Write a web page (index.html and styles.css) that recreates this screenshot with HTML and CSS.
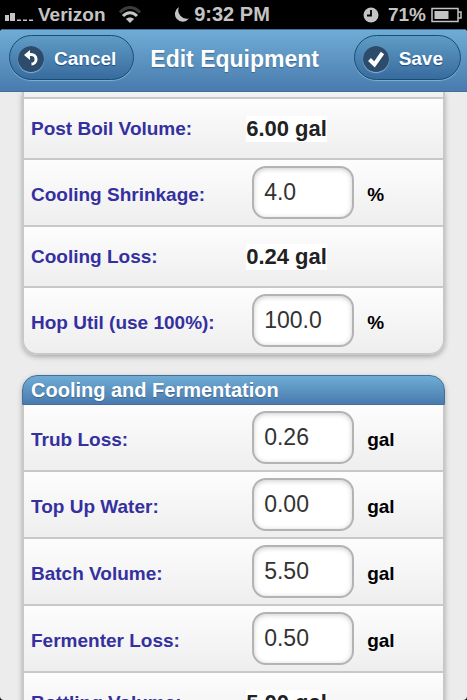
FILE: index.html
```html
<!DOCTYPE html>
<html lang="en">

<head>
    <meta charset="UTF-8">
    <meta name="viewport" content="width=device-width, initial-scale=1.0">
    <title>Edit Equipment</title>
    <link rel="stylesheet" href="styles.css">
</head>

<body>
    <div class="status-bar">
        <div class="status-left">
            <svg class="signal" width="30" height="12" viewBox="0 0 30 12">
                <path d="M1 5h4v6H1zM6 3h5v8H6zM13 9.500h4v1.500h-4zM19 9.500h4v1.500h-4zM25 9.500h4v1.500h-4z" fill="#c4c4c4" />
            </svg>
            <span class="carrier">Verizon</span>
            <svg class="wifi" width="24" height="18" viewBox="0 0 24 18">
                <g fill="none" stroke-width="3">
                    <path d="M2 6.500C8-.2 16-.2 22 6.500" stroke="#3c3c3c" />
                    <path d="M5 10C9 5.500 15 5.500 19 10" stroke="#c4c4c4" />
                </g>
                <path d="M8 13C10 11 14 11 16 13L12 17z" fill="#c4c4c4" />
            </svg>
        </div>
        <div class="status-time">
            <svg width="17" height="17" viewBox="0 0 17 17">
                <path d="M6 1A7.800 7.800 0 1 0 16 12.500A8.500 8.500 0 0 1 6 1z" fill="#c4c4c4" />
            </svg>
            <span>9:32 PM</span>
        </div>
        <div class="status-right">
            <svg width="16" height="16" viewBox="0 0 16 16">
                <circle cx="8" cy="8" r="7.500" fill="#c4c4c4" />
                <path d="M8 3v5.500H4" fill="none" stroke="#000" stroke-width="1.800" />
            </svg>
            <span class="percent">71%</span>
            <svg width="32" height="16" viewBox="0 0 32 16">
                <rect x="1" y="1.500" width="26" height="13" fill="none" stroke="#c4c4c4" stroke-width="1.500" />
                <rect x="3.500" y="4" width="14" height="8" fill="#c4c4c4" />
                <path d="M27 5h3v6h-3" fill="none" stroke="#c4c4c4" stroke-width="1.500" />
            </svg>
        </div>
    </div>

    <div class="page">
        <header class="header">
            <button type="button" class="btn">
                <svg class="btn-icon" width="26" height="26" viewBox="0 0 26 26">
                    <circle cx="13" cy="13" r="13" fill="#2d4c6b" />
                    <path d="M10 8.500h3a4.800 4.800 0 0 1 .5 9.600" fill="none" stroke="#fff" stroke-width="3" />
                    <path d="M6 9l6-5v10z" fill="#fff" />
                </svg>
                Cancel
            </button>
            <h1>Edit Equipment</h1>
            <button type="button" class="btn">
                <svg class="btn-icon" width="26" height="26" viewBox="0 0 26 26">
                    <circle cx="13" cy="13" r="13" fill="#2d4c6b" />
                    <path d="M6.500 13.500l5 5L19.500 7" fill="none" stroke="#fff" stroke-width="4" />
                </svg>
                Save
            </button>
        </header>

        <form class="content">
            <ul class="list list-continued">
                <li class="row-end"></li>
                <li class="row">
                    <span class="label">Post Boil Volume:</span>
                    <output class="value">6.00 gal</output>
                </li>
                <li class="row row-input">
                    <label class="label" for="shrinkage">Cooling Shrinkage:</label>
                    <input type="text" id="shrinkage" value="4.0">
                    <span class="unit">%</span>
                </li>
                <li class="row">
                    <span class="label">Cooling Loss:</span>
                    <output class="value">0.24 gal</output>
                </li>
                <li class="row row-input">
                    <label class="label" for="hopUtil">Hop Util (use 100%):</label>
                    <input type="text" id="hopUtil" value="100.0">
                    <span class="unit">%</span>
                </li>
            </ul>

            <ul class="list">
                <li class="divider">Cooling and Fermentation</li>
                <li class="row row-input">
                    <label class="label" for="trubLoss">Trub Loss:</label>
                    <input type="text" id="trubLoss" value="0.26">
                    <span class="unit">gal</span>
                </li>
                <li class="row row-input">
                    <label class="label" for="topUp">Top Up Water:</label>
                    <input type="text" id="topUp" value="0.00">
                    <span class="unit">gal</span>
                </li>
                <li class="row row-input">
                    <label class="label" for="batchVolume">Batch Volume:</label>
                    <input type="text" id="batchVolume" value="5.50">
                    <span class="unit">gal</span>
                </li>
                <li class="row row-input">
                    <label class="label" for="fermenterLoss">Fermenter Loss:</label>
                    <input type="text" id="fermenterLoss" value="0.50">
                    <span class="unit">gal</span>
                </li>
                <li class="row">
                    <span class="label">Bottling Volume:</span>
                    <output class="value">5.00 gal</output>
                </li>
            </ul>
        </form>
    </div>
</body>

</html>
```

FILE: styles.css
```css
* {
    box-sizing: border-box;
}

body {
    font-family: "Liberation Sans", Arial, sans-serif;
    font-size: 19px;
    background-color: #000;
    margin: 0;
    height: 100vh;
    display: flex;
    flex-direction: column;
    overflow: hidden;
}

/* status bar */
.status-bar {
    display: grid;
    grid-template-columns: 1fr auto 1fr;
    align-items: center;
    height: 29px;
    padding: 0 4px;
    color: #c4c4c4;
    font-weight: bold;
    flex-shrink: 0;
}

.status-left,
.status-time,
.status-right {
    display: flex;
    align-items: center;
}

.status-time {
    gap: 4px;
    padding-right: 24px;
    font-size: 20px;
}

.status-right {
    justify-content: flex-end;
}

.signal {
    margin-top: 3px;
}

.carrier {
    margin: 0 12px 0 4px;
}

.percent {
    margin: 0 5px 0 9px;
}

/* page */
.page {
    flex: 1;
    min-height: 0;
    display: flex;
    flex-direction: column;
    overflow: hidden;
    border-radius: 4px;
    background-color: #ececec;
}

.header {
    display: flex;
    align-items: center;
    flex-shrink: 0;
    height: 63px;
    padding: 0 6px 6px 9px;
    background: linear-gradient(#6facd5, #497bae);
    border-top: 1px solid #456f9a;
    border-bottom: 1px solid #456f9a;
    color: #fff;
    text-shadow: 0 1px 1px #3e6790;
}

h1 {
    flex: 1;
    margin: 0;
    padding: 2px 0 0 16px;
    font-size: 23px;
    line-height: 28px;
    white-space: nowrap;
}

.btn {
    display: flex;
    align-items: center;
    gap: 10px;
    height: 45px;
    padding: 2px 17px 0 8px;
    border: 1px solid #145072;
    border-radius: 23px;
    background: linear-gradient(#5f9cc5, #396b9e);
    box-shadow: 0 1px 1px #7fb0d4;
    color: #fff;
    font: bold 19px "Liberation Sans", Arial, sans-serif;
    text-shadow: 0 1px 1px #194b7e;
    cursor: pointer;
}

.btn-icon {
    border-radius: 50%;
    box-shadow: 0 1px 1px #8ab4d6;
}

/* lists */
.content {
    flex: 1;
    min-height: 0;
    overflow: hidden;
    padding: 0 22px;
}

.list {
    list-style: none;
    margin: 0 0 20px;
    padding: 0;
    border-radius: 15px;
    box-shadow: 0 2px 5px #aaa;
}

.list-continued {
    border-radius: 0 0 15px 15px;
}

.row-end {
    height: 7px;
    background-color: #f1f1f1;
    border: 2px solid #c8c8c8;
    border-top: none;
}

.row {
    display: flex;
    align-items: center;
    height: 61px;
    padding: 0 6px 0 7px;
    background: linear-gradient(#fdfdfd, #eee);
    border: 2px solid #c8c8c8;
    border-top: none;
}

.row-input {
    height: 67px;
}

.row:last-child {
    border-radius: 0 0 15px 15px;
}

.divider {
    height: 30px;
    padding: 0 8px;
    border: 1px solid #456f9a;
    border-radius: 15px 15px 0 0;
    background: linear-gradient(#6facd5, #497bae);
    color: #fff;
    font-size: 20px;
    font-weight: bold;
    line-height: 28px;
    text-shadow: 0 1px 1px #3e6790;
}

.label {
    flex: 0 0 53%;
    color: #35309f;
    font-weight: bold;
}

.row-input .label,
.unit {
    padding-top: 4px;
}

.value {
    background-color: #fff;
    color: #222;
    font-size: 22px;
    font-weight: bold;
    line-height: 26px;
}

input {
    width: 102px;
    height: 53px;
    margin: 0 13px 0 6px;
    padding: 0 10px;
    border: 2px solid #b3b3b3;
    border-radius: 14px;
    background-color: #fff;
    box-shadow: inset 0 1px 5px #ccc;
    color: #333;
    font: 23px "Liberation Sans", Arial, sans-serif;
}

.unit {
    color: #000;
    font-weight: bold;
}
```
